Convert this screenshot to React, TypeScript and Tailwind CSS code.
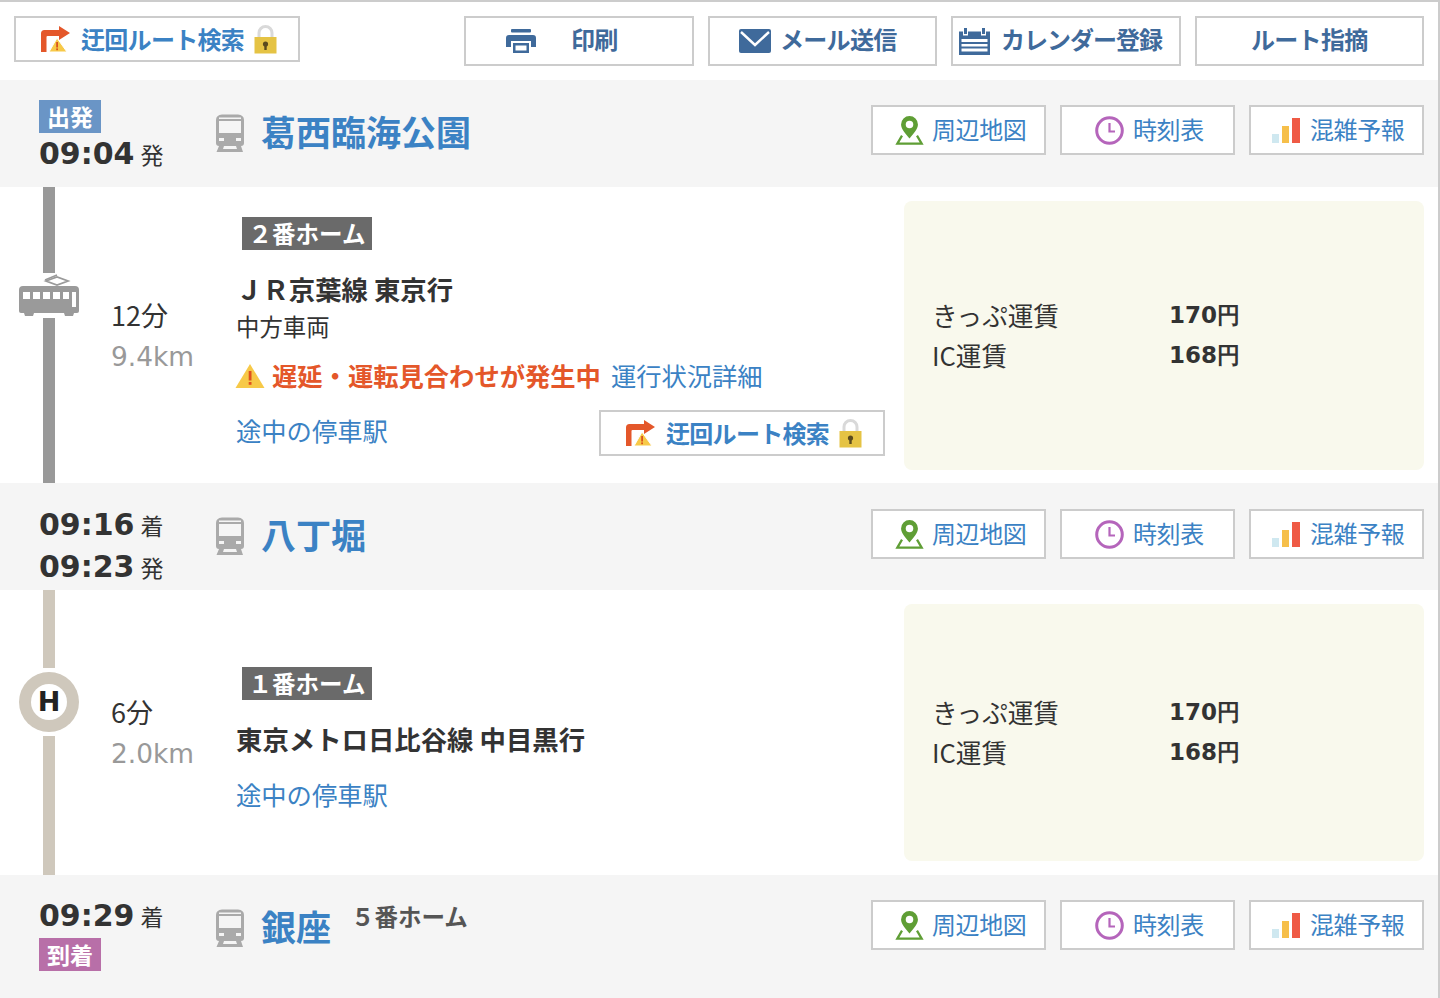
import React from "react";

const JP = "font-['Noto_Sans_CJK_JP','Noto_Sans',sans-serif]";
const DV = "font-['DejaVu_Sans',sans-serif]";

function DetourIcon() {
  return (
    <svg width="31" height="28" viewBox="0 0 31 28">
      <path d="M1 27V8.500Q1 5 4.500 5H19V1l11 7-11 7v-4H7.500Q6.500 11 6.500 12V27Z" fill="#e4572a" />
      <path d="M17 13L27 27H9Z" fill="#f7c948" stroke="#fff" strokeWidth="1" />
      <rect x="16.200" y="17" width="1.800" height="5.500" fill="#d9531e" />
      <rect x="16.200" y="23.400" width="1.800" height="1.800" fill="#d9531e" />
    </svg>
  );
}

function LockIcon() {
  return (
    <svg width="23" height="29" viewBox="0 0 23 29">
      <path d="M5 14V8a6.500 6.500 0 0 1 13 0v6" fill="none" stroke="#d9d9d9" strokeWidth="3" />
      <rect x="0.500" y="12" width="22" height="16.500" fill="#e5c344" />
      <circle cx="11.500" cy="19" r="2.600" fill="#5a4a1e" />
      <rect x="10.300" y="20" width="2.400" height="5" fill="#5a4a1e" />
    </svg>
  );
}

function PrintIcon() {
  return (
    <svg width="30" height="24" viewBox="0 0 30 24" fill="#3f6a9b">
      <rect x="5" y="0" width="20" height="3.500" rx="1" />
      <path d="M3 6h24a3 3 0 0 1 3 3v9h-5v-6H5v6H0V9a3 3 0 0 1 3-3Z" />
      <path d="M7 14h16v10H7Zm2.500 2.500v5h11v-5Z" />
    </svg>
  );
}

function MailIcon() {
  return (
    <svg width="32" height="24" viewBox="0 0 32 24">
      <path d="M0 2Q0 0 2 0H30Q32 0 32 2V22Q32 24 30 24H2Q0 24 0 22Z" fill="#3f6a9b" />
      <path d="M2 3L16 16 30 3" fill="none" stroke="#fff" strokeWidth="2.400" />
    </svg>
  );
}

function CalendarIcon() {
  return (
    <svg width="31" height="27" viewBox="0 0 31 27" fill="#3f6a9b">
      <rect x="5" y="0" width="3" height="6" />
      <rect x="23" y="0" width="3" height="6" />
      <path d="M0 3.500h4v4h5v-4h13v4h5v-4h4V27H0Zm2.500 7.500v3h26v-3Zm0 5v2.500h26V16Zm0 4.500v3h26v-3Z" fillRule="evenodd" />
    </svg>
  );
}

function TrainFront() {
  return (
    <svg width="28" height="38" viewBox="0 0 28 38" fill="#aaaaaa">
      <path d="M0 6Q0 1 6 0.500H22Q28 1 28 6V29Q28 32 25 32H3Q0 32 0 29Z" />
      <rect x="3" y="7" width="22" height="12" fill="#f5f5f5" />
      <rect x="3" y="3.500" width="22" height="1.500" fill="#f5f5f5" />
      <rect x="3" y="24" width="5" height="3" fill="#f5f5f5" />
      <rect x="20" y="24" width="5" height="3" fill="#f5f5f5" />
      <path d="M3 32h5l-1 3h14l-1-3h5l2 6H0.500Z" />
    </svg>
  );
}

function TramIcon() {
  return (
    <svg width="60" height="44" viewBox="0 0 60 44" fill="#9a9a9a">
      <path d="M27 8l11-4 11 4-11 4Z" fill="none" stroke="#9a9a9a" strokeWidth="1.800" />
      <path d="M26 7l12-5" stroke="#9a9a9a" strokeWidth="1.500" />
      <path d="M0 17Q0 13 4 13H56Q60 13 60 17V38Q60 40 58 40H2Q0 40 0 38Z" />
      <rect x="4" y="19" width="7" height="7" fill="#fff" />
      <rect x="14" y="19" width="7" height="7" fill="#fff" />
      <rect x="24" y="19" width="7" height="7" fill="#fff" />
      <rect x="34" y="19" width="7" height="7" fill="#fff" />
      <rect x="44" y="19" width="6" height="7" fill="#fff" />
      <rect x="53" y="19" width="4" height="15" fill="#fff" />
      <path d="M5 40h10l-1 3H6ZM45 40h10l-1 3h-8Z" />
    </svg>
  );
}

function PinIcon() {
  return (
    <svg width="29" height="30" viewBox="0 0 29 32">
      <path d="M14.500 1a9 9 0 0 1 9 9c0 5-5 10-9 15-4-5-9-10-9-15a9 9 0 0 1 9-9Z" fill="#5f9e35" />
      <circle cx="14.500" cy="10" r="4" fill="#fff" />
      <path d="M6.500 22L1.500 30.500H27.500L22.500 22" fill="none" stroke="#5f9e35" strokeWidth="2.400" />
    </svg>
  );
}

function ClockIcon() {
  return (
    <svg width="29" height="29" viewBox="0 0 29 29" fill="none" stroke="#b565bb">
      <circle cx="14.500" cy="14.500" r="12.800" strokeWidth="3" />
      <path d="M14.500 7v8.500H20" strokeWidth="2.200" />
    </svg>
  );
}

function BarsIcon() {
  return (
    <svg width="28" height="25" viewBox="0 0 28 25">
      <rect x="0" y="16" width="7" height="9" fill="#cfe8f0" />
      <rect x="10" y="8" width="7" height="17" fill="#f6bf4a" />
      <rect x="20" y="0" width="8" height="25" fill="#ef5a45" />
    </svg>
  );
}

function WarnIcon() {
  return (
    <svg width="30" height="26" viewBox="0 0 30 26">
      <path d="M15 1L29.500 25H0.500Z" fill="#f7c948" />
      <rect x="13.700" y="8" width="2.800" height="9.500" fill="#e0501f" />
      <rect x="13.700" y="19" width="2.800" height="2.800" fill="#e0501f" />
    </svg>
  );
}

function DetourButton({ className }: { className: string }) {
  return (
    <div className={`h-[46px] w-[286px] border-2 border-[#cccccc] bg-white flex items-center pl-[24px] ${className}`}>
      <DetourIcon />
      <span className="ml-[10px] text-[24px] leading-none font-bold text-[#3b82c4] tracking-[-0.7px]">迂回ルート検索</span>
      <span className="ml-[10px]"><LockIcon /></span>
    </div>
  );
}

function TopButton({ icon, label, gap, left, tracking }: { icon?: React.ReactNode; label: string; gap: string; left: string; tracking: string }) {
  return (
    <div className={`h-[50px] w-[229.5px] border-2 border-[#cccccc] bg-white flex items-center ${left}`}>
      {icon}
      <span className={`${gap} ${tracking} pb-[4px] text-[24px] leading-none font-bold text-[#3f6a9b] whitespace-nowrap`}>{label}</span>
    </div>
  );
}

function StationButton({ icon, label, left, gap }: { icon: React.ReactNode; label: string; left: string; gap: string }) {
  return (
    <div className={`h-[50px] w-[175px] border-2 border-[#cccccc] bg-white flex items-center ${left}`}>
      {icon}
      <span className={`${gap} pb-[3px] text-[24px] leading-none text-[#3b82c4] tracking-[-0.4px] whitespace-nowrap`}>{label}</span>
    </div>
  );
}

function StationButtons() {
  return (
    <div className="ml-auto flex gap-[14px]">
      <StationButton icon={<PinIcon />} label="周辺地図" left="pl-[22px]" gap="ml-[8px]" />
      <StationButton icon={<ClockIcon />} label="時刻表" left="pl-[33px]" gap="ml-[9px]" />
      <StationButton icon={<BarsIcon />} label="混雑予報" left="pl-[21px]" gap="ml-[10px]" />
    </div>
  );
}

function Time({ time, suffix }: { time: string; suffix: string }) {
  return (
    <div className="flex items-baseline h-[42px] leading-[42px] text-[#333333]">
      <span className={`${DV} font-bold text-[30px]`}>{time}</span>
      <span className="ml-[6px] text-[23px]">{suffix}</span>
    </div>
  );
}

function Badge({ label, color }: { label: string; color: string }) {
  return (
    <div className={`w-[62px] h-[33px] ${color} text-white text-[23px] font-bold leading-[33px] text-center`}>{label}</div>
  );
}

function Name({ label }: { label: string }) {
  return <div className="-ml-[1px] mb-[4px] text-[35px] leading-[50px] font-bold text-[#3b82c4] whitespace-nowrap">{label}</div>;
}

function Fare() {
  return (
    <div className="ml-auto w-[520px] rounded-lg bg-[#f9f9ed] flex flex-col justify-center pl-[28px] pb-[2px] text-[25.6px] leading-[39px] text-[#333333]">
      <div className="flex">
        <span className="w-[237px]">きっぷ運賃</span>
        <span className={`${DV} font-bold text-[23px] mt-[1px]`}>170円</span>
      </div>
      <div className="flex">
        <span className="w-[237px]">IC運賃</span>
        <span className={`${DV} font-bold text-[23px] mt-[1px]`}>168円</span>
      </div>
    </div>
  );
}

function Duration({ min, km }: { min: string; km: string }) {
  return (
    <div className="ml-[14px] w-[125px] self-center text-[26.4px] leading-[39px]">
      <div className="-ml-[1px] text-[27px] text-[#333333]">{min}</div>
      <div className={`${DV} mt-[3px] -ml-[1px] text-[#999999]`}>{km}</div>
    </div>
  );
}

function PlatformBadge({ label }: { label: string }) {
  return (
    <div className="ml-[5px] w-[130px] h-[33px] bg-[#6a6a6a] text-white text-[23.5px] font-bold leading-[33px] text-center whitespace-nowrap">{label}</div>
  );
}

export default function App() {
  return (
    <div className={`w-[1440px] h-[998px] overflow-hidden bg-white border-r-2 border-[#cccccc] ${JP}`}>
      <div className="h-[80px] border-t-2 border-[#cccccc] flex items-start pt-[14px] pl-[14px] pr-[14px]">
        <DetourButton className="" />
        <div className="ml-auto flex gap-[14px]">
          <TopButton icon={<PrintIcon />} label="印刷" left="pl-[40px]" gap="ml-[35px]" tracking="tracking-[-0.7px]" />
          <TopButton icon={<MailIcon />} label="メール送信" left="pl-[29px]" gap="ml-[9.5px]" tracking="tracking-[-0.7px]" />
          <TopButton icon={<CalendarIcon />} label="カレンダー登録" left="pl-[6px]" gap="ml-[11px]" tracking="tracking-[-1px]" />
          <TopButton label="ルート指摘" left="justify-center" gap="" tracking="tracking-[-0.7px]" />
        </div>
      </div>

      <div className="h-[107px] bg-[#f5f5f5] flex pl-[39px] pr-[14px] pt-[20px]">
        <div className="w-[177px]">
          <Badge label="出発" color="bg-[#6a95c6]" />
          <Time time="09:04" suffix="発" />
        </div>
        <div className="flex gap-[18px] items-center h-[66px] self-start">
          <TrainFront />
          <Name label="葛西臨海公園" />
        </div>
        <div className="ml-auto mt-[5px]"><StationButtons /></div>
      </div>

      <div className="h-[296px] flex pr-[14px]">
        <div className="w-[98px] flex flex-col items-center">
          <div className="w-[12px] h-[86px] bg-[#999999]" />
          <TramIcon />
          <div className="w-[12px] flex-1 bg-[#999999] mt-[1px]" />
        </div>
        <Duration min="12分" km="9.4km" />
        <div className="w-[662px] pt-[30px] text-[#333333]">
          <PlatformBadge label="２番ホーム" />
          <div className="mt-[20px] -ml-[1px] text-[26.4px] leading-[38px] font-bold whitespace-nowrap">ＪＲ京葉線 東京行</div>
          <div className="-mt-[1px] -ml-[1px] text-[23.4px] leading-[38px]">中方車両</div>
          <div className="mt-[12px] -ml-[2px] flex items-center h-[38px] whitespace-nowrap">
            <WarnIcon />
            <span className="ml-[7px] text-[25.3px] font-bold text-[#e4572a]">遅延・運転見合わせが発生中</span>
            <span className="ml-[10px] text-[25.3px] text-[#3b82c4]">運行状況詳細</span>
          </div>
          <div className="mt-[16px] flex items-start">
            <span className="-ml-[1px] text-[25.3px] leading-[38px] text-[#3b82c4]">途中の停車駅</span>
            <DetourButton className="ml-auto mr-[14px] -mt-[1px]" />
          </div>
        </div>
        <div className="flex-1 flex pt-[14px] pb-[13px]"><Fare /></div>
      </div>

      <div className="h-[107px] bg-[#f5f5f5] flex pl-[39px] pr-[14px] pt-[20px]">
        <div className="w-[177px]">
          <div className="mt-[1px]"><Time time="09:16" suffix="着" /></div>
          <Time time="09:23" suffix="発" />
        </div>
        <div className="flex gap-[18px] items-center h-[66px] self-start">
          <TrainFront />
          <Name label="八丁堀" />
        </div>
        <div className="ml-auto mt-[6px]"><StationButtons /></div>
      </div>

      <div className="h-[285px] flex pr-[14px]">
        <div className="w-[98px] flex flex-col items-center">
          <div className="w-[12px] h-[78px] bg-[#cfc8bc]" />
          <div className="my-[4px] w-[60px] h-[60px] rounded-full bg-[#cfc8bc] flex items-center justify-center">
            <div className={`${DV} w-[36px] h-[36px] rounded-full bg-white text-[#222222] font-bold text-[27px] leading-[36px] text-center`}>H</div>
          </div>
          <div className="w-[12px] flex-1 bg-[#cfc8bc]" />
        </div>
        <Duration min="6分" km="2.0km" />
        <div className="w-[662px] pt-[77px] text-[#333333]">
          <PlatformBadge label="１番ホーム" />
          <div className="mt-[20px] -ml-[1px] text-[26.4px] leading-[38px] font-bold whitespace-nowrap">東京メトロ日比谷線 中目黒行</div>
          <div className="mt-[17px] -ml-[1px] text-[25.3px] leading-[38px] text-[#3b82c4]">途中の停車駅</div>
        </div>
        <div className="flex-1 flex py-[14px]"><Fare /></div>
      </div>

      <div className="h-[123px] bg-[#f5f5f5] flex pl-[39px] pr-[14px] pt-[20px]">
        <div className="w-[177px]">
          <Time time="09:29" suffix="着" />
          <div className="mt-[1px]"><Badge label="到着" color="bg-[#b86fa8]" /></div>
        </div>
        <div className="flex gap-[18px] items-center h-[66px] self-start">
          <TrainFront />
          <Name label="銀座" />
        </div>
        <div className="ml-[20px] -mt-[1px] text-[23.5px] leading-[44px] font-bold text-[#555555] whitespace-nowrap">５番ホーム</div>
        <div className="ml-auto mt-[5px]"><StationButtons /></div>
      </div>
    </div>
  );
}
